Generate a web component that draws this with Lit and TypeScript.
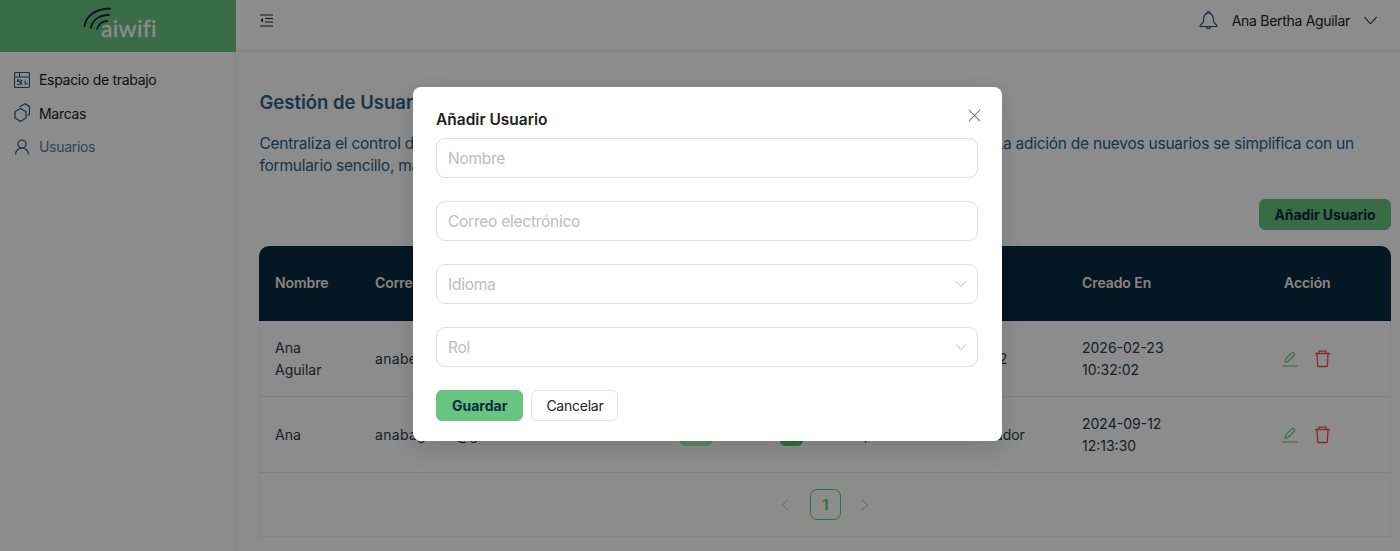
import { LitElement, css, html, svg } from "lit";
import { customElement } from "lit/decorators.js";

const chevronDown = svg`<path d="M1.500 4.500L8 11.500l6.500-7" fill="none" stroke="currentColor" stroke-width="1.200" />`;

const users = [
  {
    name: "Ana Aguilar",
    email: "anabertha@aiwifi.com",
    lang: "Español",
    role: "Operador 2",
    created: "2026-02-23 10:32:02",
  },
  {
    name: "Ana",
    email: "anabaguilar@gmail.com",
    lang: "Español",
    role: "Administrador",
    created: "2024-09-12 12:13:30",
  },
];

@customElement("app-root")
export class AppRoot extends LitElement {
  static styles = css`
    :host {
      display: block;
      position: relative;
      height: 551px;
      overflow: hidden;
      font-family: Inter, "Liberation Sans", sans-serif;
      font-size: 14px;
      color: #2a3a45;
      background: #fff;
    }

    .layout {
      display: grid;
      grid-template-columns: 236px 1fr;
      height: 100%;
    }

    .logo {
      height: 52px;
      background: #68c481;
      position: relative;
    }

    .logo svg {
      position: absolute;
      left: 83px;
      top: 7px;
    }

    .wordmark {
      position: absolute;
      left: 101px;
      top: 13px;
      font-family: Lato, sans-serif;
      font-size: 23px;
      line-height: 30px;
      letter-spacing: 0.3px;
      color: #fff;
      -webkit-text-stroke: 0.3px #fff;
    }

    nav {
      display: grid;
      align-content: start;
      gap: 13px;
      height: 481px;
      padding: 17.500px 0 0 14px;
      font-size: 14px;
      letter-spacing: -0.3px;
      border-right: 1px solid #f4f4f4;
    }

    nav a {
      display: flex;
      align-items: center;
      gap: 9px;
      height: 20.500px;
      color: #1c1c1c;
    }

    nav a.active {
      color: #5a7f9c;
    }

    nav svg {
      width: 16px;
      height: 20px;
      flex: none;
      color: #2f5474;
    }

    .main {
      min-width: 0;
    }

    .topbar {
      height: 51px;
      border-bottom: 1px solid #f0f0f0;
      display: flex;
      align-items: center;
      padding: 0 22px 0 24px;
      font-size: 14px;
      letter-spacing: -0.3px;
      color: #222;
    }

    .topbar .fold {
      width: 13px;
      height: 13px;
      margin-right: auto;
      margin-bottom: 11px;
      color: #222;
    }

    .user {
      display: flex;
      align-items: center;
      margin-bottom: 11px;
    }

    .user .bell {
      width: 21px;
      height: 21px;
      margin-right: 13px;
      color: #2f5474;
    }

    .user .down {
      width: 15px;
      height: 15px;
      margin-left: 13px;
    }

    .content {
      padding: 36px 9px 0 24px;
    }

    h1 {
      margin: 0 0 0 -0.500px;
      font-size: 18.500px;
      line-height: 28px;
      font-weight: 600;
      color: #2f6287;
    }

    .intro {
      margin: 17px 0 0 -0.500px;
      font-size: 15.500px;
      letter-spacing: -0.25px;
      line-height: 22px;
      color: #2e6088;
    }

    .actions {
      display: flex;
      justify-content: flex-end;
      margin-top: 22px;
    }

    .btn {
      box-sizing: border-box;
      height: 31px;
      border-radius: 6px;
      border: 1px solid #e3e3e3;
      background: #fff;
      font: inherit;
      font-size: 14px;
      letter-spacing: -0.25px;
      color: #222;
      padding: 0 14px;
    }

    .btn.primary {
      background: #68c481;
      border-color: #68c481;
      color: #0a2a3e;
      font-weight: 700;
      letter-spacing: 0;
      padding: 0 15px;
    }

    .actions .btn.primary {
      letter-spacing: -0.07px;
      padding: 0 14.500px;
    }

    .card {
      margin: 16px 0 0 -1px;
      border: 1px solid #f2f2f2;
      border-top: 0;
      border-radius: 10px 10px 0 0;
      height: 290px;
    }

    table {
      width: 1132px;
      margin: 0 -1px;
      border-collapse: separate;
      border-spacing: 0;
      table-layout: fixed;
    }

    th {
      height: 73px;
      background: #0a2a3e;
      color: #f2f2f2;
      font-weight: 600;
      letter-spacing: -0.08px;
      text-align: left;
      padding: 0 15px 1px;
      border-bottom: 1px solid #123;
    }

    th:first-child {
      padding-left: 16px;
      border-top-left-radius: 10px;
    }

    th:last-child {
      border-top-right-radius: 10px;
    }

    td {
      height: 76px;
      box-sizing: border-box;
      padding: 0 15px;
      line-height: 22px;
      color: #2a3a45;
      border-bottom: 1px solid #ececec;
      overflow: hidden;
      white-space: nowrap;
    }

    td:first-child {
      padding-left: 16px;
    }

    td.wrap {
      white-space: normal;
    }

    td.email {
      letter-spacing: 0.3px;
    }

    tr td.created {
      white-space: normal;
      padding-right: 100px;
    }

    .pill {
      display: inline-block;
      height: 20px;
      line-height: 20px;
      padding: 0 6px;
      border-radius: 5px;
      font-size: 12px;
      background: #aef5bf;
      color: #2f7a45;
      vertical-align: middle;
    }

    .pill.wide {
      width: 20px;
      text-align: center;
    }

    .pill.strong {
      background: #55cc66;
      color: #fff;
    }

    .row-actions {
      display: flex;
      gap: 16px;
      margin-left: -3px;
    }

    .row-actions svg {
      width: 17px;
      height: 18px;
    }

    .edit {
      color: #68c481;
    }

    .trash {
      color: #e4534f;
    }

    .pager {
      display: flex;
      justify-content: center;
      align-items: center;
      margin: 16px 0 0;
      color: #bdbdbd;
    }

    .pager svg {
      width: 10px;
      height: 12px;
    }

    .pager b {
      box-sizing: border-box;
      width: 31px;
      height: 31px;
      margin: 0 19px 0 20px;
      display: grid;
      place-items: center;
      border: 1px solid #68c481;
      border-radius: 7px;
      color: #68c481;
      font-weight: 700;
    }

    .mask {
      position: absolute;
      inset: 0;
      background: rgba(0, 0, 0, 0.45);
    }

    .modal {
      position: absolute;
      left: 413px;
      top: 87px;
      width: 589px;
      height: 354px;
      box-sizing: border-box;
      padding: 22px 24px 0 23px;
      background: #fff;
      border-radius: 8px;
      box-shadow: 0 6px 16px rgba(0, 0, 0, 0.08), 0 9px 28px rgba(0, 0, 0, 0.05);
    }

    .modal h2 {
      margin: 0;
      font-size: 15.500px;
      line-height: 22px;
      font-weight: 600;
      color: #1d1d1d;
    }

    .close {
      position: absolute;
      right: 21px;
      top: 22px;
      width: 13px;
      height: 13px;
      color: #777;
    }

    .fields {
      display: grid;
      gap: 23.500px;
      margin-top: 7px;
    }

    .field {
      box-sizing: border-box;
      height: 39.500px;
      border: 1px solid #dedede;
      border-radius: 9px;
      padding: 1px 11px 0;
      display: flex;
      align-items: center;
      justify-content: space-between;
      font-size: 15.500px;
      letter-spacing: -0.25px;
      color: #bdbdbd;
    }

    .field svg {
      width: 12px;
      height: 12px;
      margin-right: -1px;
      color: #ababab;
    }

    .buttons {
      display: flex;
      gap: 8px;
      margin-top: 23.500px;
    }
  `;

  private renderRow(u: (typeof users)[number]) {
    return html`<tr>
      <td class="wrap">${u.name}</td>
      <td class="email">${u.email}</td>
      <td><span class="pill wide">Sí</span></td>
      <td><span class="pill strong">Sí</span></td>
      <td>${u.lang}</td>
      <td>${u.role}</td>
      <td class="created">${u.created}</td>
      <td>
        <div class="row-actions">
          <svg class="edit" viewBox="0 0 17 18" fill="none" stroke="currentColor" stroke-width="1.100">
            <path d="M4 12.200l.6-3L11 2.600a1 1 0 0 1 1.400 0l1 1a1 1 0 0 1 0 1.400L7 11.500l-3 .7z" />
            <path d="M1 16h15.500" />
          </svg>
          <svg class="trash" viewBox="0 0 17 18" fill="none" stroke="currentColor" stroke-width="1.300">
            <path d="M1 3.500h15M5 3.500V1.200h7v2.300M3 3.500l.6 12a1 1 0 0 0 1 1h7.800a1 1 0 0 0 1-1l.6-12" />
          </svg>
        </div>
      </td>
    </tr>`;
  }

  protected render() {
    return html`
      <div class="layout">
        <aside>
          <div class="logo">
            <svg width="32" height="24" viewBox="0 0 32 24" fill="none" stroke="#0a2a3e" stroke-width="1.800" stroke-linecap="round">
              <path d="M1.500 19C3 10 11 2 27 1.500" />
              <path d="M8 21C9 14 15 8 26 8" />
              <path d="M14 22c1-4 5-8 10-8" />
            </svg>
            <span class="wordmark">aiwifi</span>
          </div>
          <nav>
            <a>
              <svg viewBox="0 0 16 20" fill="none" stroke="currentColor" stroke-width="1.100">
                <rect x="0.500" y="2.500" width="15" height="15" rx="1" />
                <path d="M0.500 7h15M5.500 2.500V7M6.500 10H3.500v1.500h1.500a1.500 1.500 0 0 1 0 3H3M8.500 14.500a2.500 2.500 0 0 1 0-4.500M11 10.500v4M13 12.500v2" />
              </svg>
              Espacio de trabajo
            </a>
            <a>
              <svg viewBox="0 0 16 20" fill="none" stroke="currentColor" stroke-width="1.200">
                <path d="M6.500 5.500l5.500 3V15l-5.500 3.500L1 15V8.500z" />
                <path d="M5.500 4L11 .8l4.500 2.700v8l-2 1" />
              </svg>
              Marcas
            </a>
            <a class="active">
              <svg viewBox="0 0 16 20" fill="none" stroke="currentColor" stroke-width="1.200">
                <circle cx="8" cy="7" r="4" />
                <path d="M1.500 17.500a6.500 6.500 0 0 1 13 0" />
              </svg>
              Usuarios
            </a>
          </nav>
        </aside>
        <div class="main">
          <header class="topbar">
            <svg class="fold" viewBox="0 0 13 13" fill="none" stroke="currentColor" stroke-width="1.100">
              <path d="M0 1h13M5 4.500h8M5 8h8M0 12h13" />
              <path d="M3 4L0.500 6.300 3 8.500z" fill="currentColor" stroke="none" />
            </svg>
            <div class="user">
              <svg class="bell" viewBox="0 0 21 21" fill="none" stroke="currentColor" stroke-width="1.200">
                <path d="M8.800 3.200a1.700 1.700 0 0 1 3.400 0M5.500 11c0-4 1.500-7.800 5-7.800s5 3.800 5 7.800c0 2 3.500 3.500 3.500 5.500H2c0-2 3.500-3.500 3.500-5.500z" />
                <path d="M8.500 16.500a2 2 0 0 0 4 0" />
              </svg>
              Ana Bertha Aguilar
              <svg class="down" viewBox="0 0 16 16">${chevronDown}</svg>
            </div>
          </header>
          <section class="content">
            <h1>Gestión de Usuarios</h1>
            <p class="intro">
              Centraliza el control de los usuarios de tu organización desde una sola vista, con permisos claros y fijo. La adición de nuevos usuarios se simplifica con un
              formulario sencillo, manteniendo la información siempre actualizada.
            </p>
            <div class="actions">
              <button class="btn primary">Añadir Usuario</button>
            </div>
            <div class="card">
              <table>
                <colgroup>
                  <col style="width:101px" />
                  <col style="width:305px" />
                  <col style="width:100px" />
                  <col style="width:68px" />
                  <col style="width:84px" />
                  <col style="width:150px" />
                  <col style="width:202px" />
                  <col style="width:122px" />
                </colgroup>
                <thead>
                  <tr>
                    <th>Nombre</th>
                    <th>Correo electrónico</th>
                    <th>Activo</th>
                    <th>Estado</th>
                    <th>Idioma</th>
                    <th>Rol</th>
                    <th>Creado En</th>
                    <th>Acción</th>
                  </tr>
                </thead>
                <tbody>${users.map((u) => this.renderRow(u))}</tbody>
              </table>
              <div class="pager">
                <svg viewBox="0 0 10 12" fill="none" stroke="currentColor"><path d="M8 1L2 6l6 5" /></svg>
                <b>1</b>
                <svg viewBox="0 0 10 12" fill="none" stroke="currentColor"><path d="M2 1l6 5-6 5" /></svg>
              </div>
            </div>
          </section>
        </div>
      </div>
      <div class="mask"></div>
      <div class="modal">
        <h2>Añadir Usuario</h2>
        <svg class="close" viewBox="0 0 14 14" fill="none" stroke="currentColor" stroke-width="1.100">
          <path d="M1 1l12 12M13 1L1 13" />
        </svg>
        <div class="fields">
          <div class="field">Nombre</div>
          <div class="field">Correo electrónico</div>
          <div class="field">Idioma <svg viewBox="0 0 16 16">${chevronDown}</svg></div>
          <div class="field">Rol <svg viewBox="0 0 16 16">${chevronDown}</svg></div>
        </div>
        <div class="buttons">
          <button class="btn primary">Guardar</button>
          <button class="btn">Cancelar</button>
        </div>
      </div>
    `;
  }
}
